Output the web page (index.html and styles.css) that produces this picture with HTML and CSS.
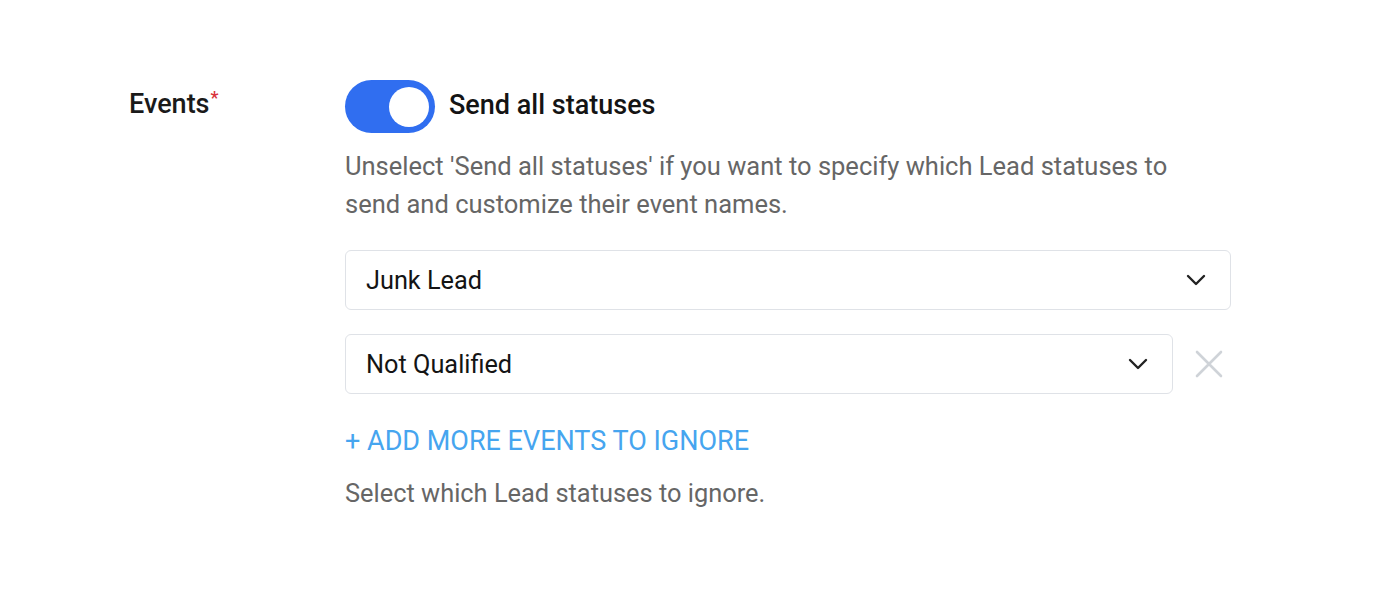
FILE: index.html
```html
<!DOCTYPE html>
<html>
<head>
<meta charset="utf-8">
<link rel="stylesheet" href="styles.css">
</head>
<body>
<div class="form-row">
  <div class="label">Events<span class="req">*</span></div>
  <div class="field">
    <div class="toggle-row">
      <span class="toggle"><span class="knob"></span></span>
      <span class="toggle-text">Send all statuses</span>
    </div>
    <p class="help">Unselect 'Send all statuses' if you want to specify which Lead statuses to send and customize their event names.</p>
    <div class="select-row">
      <div class="select wide">
        <span>Junk Lead</span>
        <svg class="chev" width="20" height="12" viewBox="0 0 20 12"><path d="M2 2 L10 10 L18 2" fill="none" stroke="#222" stroke-width="2.4" stroke-linecap="round" stroke-linejoin="round"/></svg>
      </div>
    </div>
    <div class="select-row">
      <div class="select narrow">
        <span>Not Qualified</span>
        <svg class="chev" width="20" height="12" viewBox="0 0 20 12"><path d="M2 2 L10 10 L18 2" fill="none" stroke="#222" stroke-width="2.4" stroke-linecap="round" stroke-linejoin="round"/></svg>
      </div>
      <svg class="remove" width="28" height="28" viewBox="0 0 28 28"><path d="M2 2 L26 26 M26 2 L2 26" stroke="#cfd3d8" stroke-width="2.6" stroke-linecap="round"/></svg>
    </div>
    <a class="add" href="#">+ ADD MORE EVENTS TO IGNORE</a>
    <p class="help bottom">Select which Lead statuses to ignore.</p>
  </div>
</div>
</body>
</html>
```

FILE: styles.css
```css
html, body {
  margin: 0;
  padding: 0;
  background: #fff;
}
body {
  font-family: Roboto, "Liberation Sans", sans-serif;
  color: #141414;
}
.form-row {
  display: flex;
  padding: 80px 0 0 129px;
}
.label {
  width: 216px;
  font-size: 27px;
  font-weight: 500;
  line-height: 28px;
  padding-top: 10px;
  color: #1a1a1a;
}
.req {
  color: #d9313a;
  font-size: 18px;
  vertical-align: top;
  position: relative;
  top: -6px;
  margin-left: 1px;
}
.field {
  display: flex;
  flex-direction: column;
  width: 886px;
}
.toggle-row {
  display: flex;
  align-items: center;
  gap: 14px;
  height: 53px;
}
.toggle {
  width: 90px;
  height: 53px;
  border-radius: 27px;
  background: #306ef0;
  display: flex;
  align-items: center;
  justify-content: flex-end;
  padding-right: 6px;
  box-sizing: border-box;
}
.knob {
  width: 40px;
  height: 40px;
  border-radius: 50%;
  background: #fff;
}
.toggle-text {
  font-size: 27px;
  font-weight: 500;
  color: #141414;
  position: relative;
  top: -2px;
}
.help {
  margin: 14px 0 0;
  font-size: 25.5px;
  line-height: 38px;
  color: #666;
  max-width: 830px;
}
.select-row {
  display: flex;
  align-items: center;
  gap: 22px;
}
.select-row + .select-row {
  margin-top: 24px;
}
.help + .select-row {
  margin-top: 27px;
}
.select {
  box-sizing: border-box;
  height: 60px;
  border: 1px solid #dfe2e7;
  border-radius: 6px;
  display: flex;
  align-items: center;
  justify-content: space-between;
  padding: 0 24px 0 20px;
  font-size: 25.3px;
  color: #141414;
}
.select.wide { width: 887px; }
.select.narrow { width: 828px; }
.chev { display: block; }
.add {
  margin-top: 31px;
  font-size: 27px;
  line-height: 32px;
  color: #46a5ef;
  text-decoration: none;
  align-self: flex-start;
}
.help.bottom {
  margin-top: 20px;
  font-size: 25.4px;
  line-height: 32px;
}
```
